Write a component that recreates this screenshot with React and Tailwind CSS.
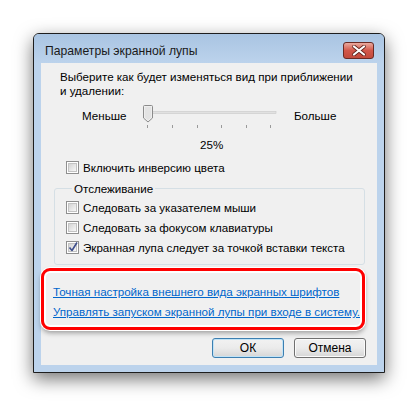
import React from 'react';

const FONT = { fontFamily: '"Liberation Sans", Arial, sans-serif' };

function CheckBox({ checked }) {
  return (
    <span className="flex h-[13px] w-[13px] shrink-0 items-center justify-center border border-[#8f8f8f] bg-white">
      <span className="relative block h-[9px] w-[9px] border border-[#c3c3c3] bg-gradient-to-br from-[#d4d4d4] to-[#f7f7f7]">
        {checked && (
          <svg className="absolute -left-[2px] -top-[3px]" width="12" height="12" viewBox="0 0 12 12">
            <path d="M2.5 6.5 L5 9.5 L10 1.5" fill="none" stroke="#3f4f8c" strokeWidth="1.6" strokeLinejoin="round" />
          </svg>
        )}
      </span>
    </span>
  );
}

function CheckRow({ label, checked }) {
  return (
    <div className="flex items-center gap-[4px] whitespace-nowrap leading-[15px]">
      <CheckBox checked={checked} />
      <span>{label}</span>
    </div>
  );
}

function Slider() {
  const ticks = [4, 29, 54, 78, 103, 127];
  return (
    <svg width="140" height="24" viewBox="0 0 140 24" className="shrink-0">
      <rect x="6" y="7.5" width="127" height="2" fill="#e1e1e1" stroke="#c9c9c9" strokeWidth="0.6" />
      <path d="M0.5 2.5 Q0.5 1.5 1.5 1.5 H8.5 Q9.5 1.5 9.5 2.5 V14 L5 18 L0.5 14 Z" fill="#eeeeee" stroke="#8b8b8b" />
      <path d="M2 3 H8 V13.5 L5 16.2 L2 13.5 Z" fill="#e3e3e3" />
      {ticks.map((x) => (
        <rect key={x} x={x} y="21" width="1" height="3" fill="#9a9a9a" />
      ))}
    </svg>
  );
}

function CloseButton() {
  return (
    <div className="flex h-[17px] w-[31px] items-center justify-center rounded-[3px] border border-[#6b2a24] bg-gradient-to-b from-[#e9a99f] via-[#d2574a] to-[#c24a3c]">
      <svg width="14" height="11" viewBox="0 0 14 11">
        <path d="M2 1.5 L12 9.5 M12 1.5 L2 9.5" stroke="#5a1f19" strokeWidth="3.6" strokeLinecap="round" />
        <path d="M2 1.5 L12 9.5 M12 1.5 L2 9.5" stroke="#ffffff" strokeWidth="2.2" strokeLinecap="round" />
      </svg>
    </div>
  );
}

function Button({ children, primary }) {
  return (
    <button
      className={`h-[20px] w-[72px] rounded-[3px] border bg-gradient-to-b from-[#f2f2f2] via-[#ebebeb] to-[#d6d6d6] text-[12px] leading-[18px] text-black ${
        primary ? 'border-[#3c7fb1] shadow-[inset_0_0_0_1px_#c2e3f6]' : 'border-[#707070] shadow-[inset_0_0_0_1px_#fbfbfb]'
      }`}
    >
      {children}
    </button>
  );
}

export default function App() {
  return (
    <div className="h-[407px] w-[418px] overflow-hidden bg-white pl-[33px] pt-[33px] text-[11.6px] text-black" style={FONT}>
      <div className="w-[352px] rounded-t-[6px] border border-[#1e1e1e] bg-[#bcd3ec] px-[7px] pb-[7px] shadow-[0_6px_18px_rgba(0,0,0,0.55)]">
        <div className="-mx-[7px] flex h-[29px] items-end justify-between rounded-t-[5px] bg-gradient-to-b from-[#a9c4e2] to-[#bcd3ec] px-[7px] pb-[4px]">
          <span className="pl-[4px] text-[12.2px] leading-[16px] text-[#1a1a1a]">Параметры экранной лупы</span>
          <div className="mr-[3px]">
            <CloseButton />
          </div>
        </div>
        <div className="flex h-[302px] flex-col bg-[#f0f0f0]">
          <p className="ml-[19px] mt-[7px] whitespace-nowrap leading-[14px]">
            Выберите как будет изменяться вид при приближении
            <br />и удалении:
          </p>
          <div className="ml-[41px] mt-[6px] flex h-[24px] items-start whitespace-nowrap">
            <span className="w-[57px] leading-[24px]">Меньше</span>
            <div className="ml-[4px]">
              <Slider />
            </div>
            <span className="ml-[11px] leading-[24px]">Больше</span>
          </div>
          <div className="ml-[159px] mt-[9px] leading-[15px]">25%</div>
          <div className="ml-[25px] mt-[8px]">
            <CheckRow label="Включить инверсию цвета" />
          </div>
          <fieldset className="ml-[13px] mt-[6px] w-[311px] rounded-[3px] border border-[#d5dfe5] pb-[9px] pl-[11px]">
            <legend className="ml-[6px] px-[2px] leading-[15px]">Отслеживание</legend>
            <div className="mt-[4px] flex flex-col gap-[5px]">
              <CheckRow label="Следовать за указателем мыши" />
              <CheckRow label="Следовать за фокусом клавиатуры" />
              <CheckRow label="Экранная лупа следует за точкой вставки текста" checked />
            </div>
          </fieldset>
          <div className="mt-[3px] flex h-[62px] w-[324px] flex-col gap-[5px] whitespace-nowrap rounded-[9px] border-[3px] border-[#ff0000] pl-[9px] pt-[13px] shadow-[inset_0_0_0_2px_#ffffff,0_0_0_1px_#ffffff,0_3px_5px_rgba(0,0,0,0.35)]">
            <a className="leading-[15px] text-[#0066cc] underline">Точная настройка внешнего вида экранных шрифтов</a>
            <a className="leading-[15px] text-[#0066cc] underline">Управлять запуском экранной лупы при входе в систему.</a>
          </div>
          <div className="mt-[8px] flex justify-end gap-[10px] pr-[11px]">
            <Button primary>ОК</Button>
            <Button>Отмена</Button>
          </div>
        </div>
      </div>
    </div>
  );
}
